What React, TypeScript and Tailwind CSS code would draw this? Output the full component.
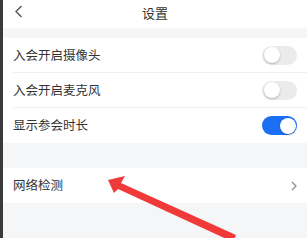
import React from "react";

function Toggle({ on }: { on?: boolean }) {
  return (
    <div
      className={
        "relative w-[35px] h-[19px] rounded-full " +
        (on ? "bg-[#1a6ff4]" : "bg-[#ebebed]")
      }
    >
      <div
        className={
          "absolute top-[1.5px] w-[16px] h-[16px] rounded-full bg-white shadow-[0_1px_2px_rgba(0,0,0,0.25)] " +
          (on ? "right-[1.5px]" : "left-[1.5px]")
        }
      />
    </div>
  );
}

function Row({ label, children, border }: { label: string; children: React.ReactNode; border?: boolean }) {
  return (
    <div className="bg-white pl-[10px]">
      <div
        className={
          "h-[35px] flex items-center justify-between pr-[10px] " +
          (border ? "border-b border-[#f0f0f2]" : "")
        }
      >
        <span className="text-[12.5px] text-[#333]">{label}</span>
        {children}
      </div>
    </div>
  );
}

export default function App() {
  return (
    <div
      className="relative w-[307px] h-[238px] overflow-hidden flex bg-[#f5f6f8]"
      style={{ fontFamily: '"Noto Sans CJK SC", "Noto Sans", sans-serif' }}
    >
      <div className="w-[3px] bg-[#3a3a3a] shrink-0" />
      <div className="flex-1 flex flex-col">
        <div className="h-[28px] bg-white relative flex items-center justify-center pb-[3px]">
          <svg className="absolute left-[10px] top-[4px]" width="12" height="16" viewBox="0 0 12 16">
            <path d="M8.5 2 L3 7.5 L8.5 13" fill="none" stroke="#555" strokeWidth="1.4" />
          </svg>
          <span className="text-[13px] text-[#333]">设置</span>
        </div>
        <div className="h-[10px]" />
        <Row label="入会开启摄像头" border>
          <Toggle />
        </Row>
        <Row label="入会开启麦克风" border>
          <Toggle />
        </Row>
        <Row label="显示参会时长">
          <Toggle on />
        </Row>
        <div className="h-[25px]" />
        <Row label="网络检测">
          <svg width="6" height="12" viewBox="0 0 6 12">
            <path d="M1 2 L5 6 L1 10" fill="none" stroke="#8a8a8a" strokeWidth="1.2" />
          </svg>
        </Row>
      </div>
      <svg className="absolute left-0 top-0 pointer-events-none" width="307" height="238" viewBox="0 0 307 238">
        <polygon
          points="108,180 125,176 121,183 236,235 233,242 118,189 114,193"
          fill="#f03a3a"
        />
      </svg>
    </div>
  );
}
